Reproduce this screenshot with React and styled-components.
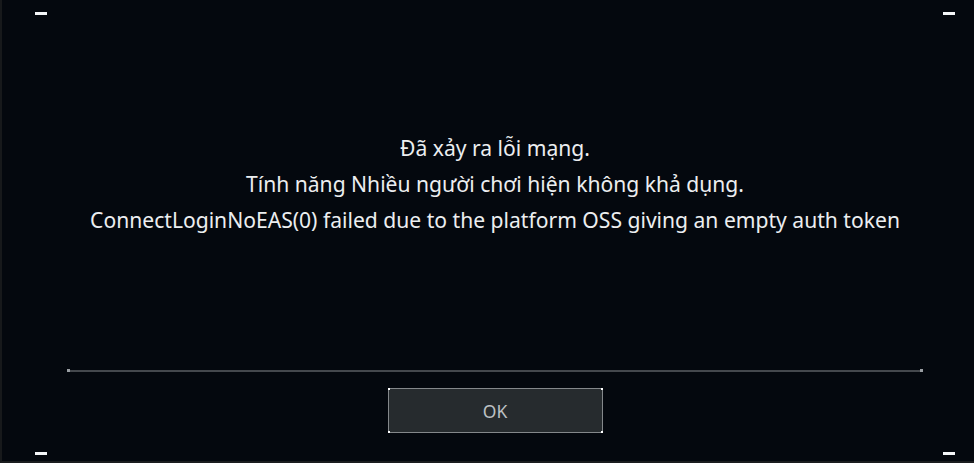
import React from "react"
import styled, { createGlobalStyle } from "styled-components"

const GlobalStyle = createGlobalStyle`
  html, body {
    margin: 0;
    padding: 0;
    background: #04080e;
  }
  #root {
    width: 974px;
    height: 463px;
  }
`;

const Screen = styled.div`
  position: relative;
  box-sizing: border-box;
  width: 974px;
  height: 463px;
  background: #04080e;
  border-left: 2px solid #17191b;
  border-bottom: 2px solid #1a1c1e;
  display: flex;
  flex-direction: column;
  align-items: center;
  font-family: "Noto Sans", "Open Sans", sans-serif;
  overflow: hidden;
`;

const Corner = styled.span`
  position: absolute;
  width: 12px;
  height: 3px;
  background: #f4f6f8;
  ${p => (p.$top ? "top: 12px;" : "bottom: 6px;")}
  ${p => (p.$left ? "left: 33px;" : "right: 19px;")}
`;

const Message = styled.div`
  margin-top: 130px;
  padding-left: 14px;
  color: #eceef0;
  font-size: 21.1px;
  line-height: 36px;
  text-align: center;
  height: 108px;
`;

const Line = styled.div`
  white-space: nowrap;
`;

const Divider = styled.div`
  position: relative;
  margin-top: 132px;
  width: 854px;
  margin-left: 13px;
  height: 2px;
  background: #44484d;
`;

const Dot = styled.span`
  position: absolute;
  top: -1px;
  width: 3px;
  height: 3px;
  background: #9a9ea3;
  ${p => (p.$left ? "left: -1px;" : "right: -1px;")}
`;

const Button = styled.button`
  position: relative;
  margin-top: 16px;
  margin-left: 14px;
  width: 215px;
  height: 45px;
  box-sizing: border-box;
  background: #262b2e;
  border: 1px solid #84888b;
  color: #bcc0c3;
  font-family: "Noto Sans", "Open Sans", sans-serif;
  font-size: 17.5px;
  padding: 0;
  cursor: pointer;
`;

const Pin = styled.span`
  position: absolute;
  width: 2px;
  height: 2px;
  background: #ffffff;
  ${p => (p.$top ? "top: -1px;" : "bottom: -1px;")}
  ${p => (p.$left ? "left: -1px;" : "right: -1px;")}
`;

const lines = [
  "Đã xảy ra lỗi mạng.",
  "Tính năng Nhiều người chơi hiện không khả dụng.",
  "ConnectLoginNoEAS(0) failed due to the platform OSS giving an empty auth token",
];

export default function App() {
  return (
    <>
      <GlobalStyle />
      <Screen>
        <Corner $top $left />
        <Corner $top />
        <Corner $left />
        <Corner />
        <Message>
          {lines.map(l => (
            <Line key={l}>{l}</Line>
          ))}
        </Message>
        <Divider>
          <Dot $left />
          <Dot />
        </Divider>
        <Button>
          <Pin $top $left />
          <Pin $top />
          <Pin $left />
          <Pin />
          OK
        </Button>
      </Screen>
    </>
  )
}
